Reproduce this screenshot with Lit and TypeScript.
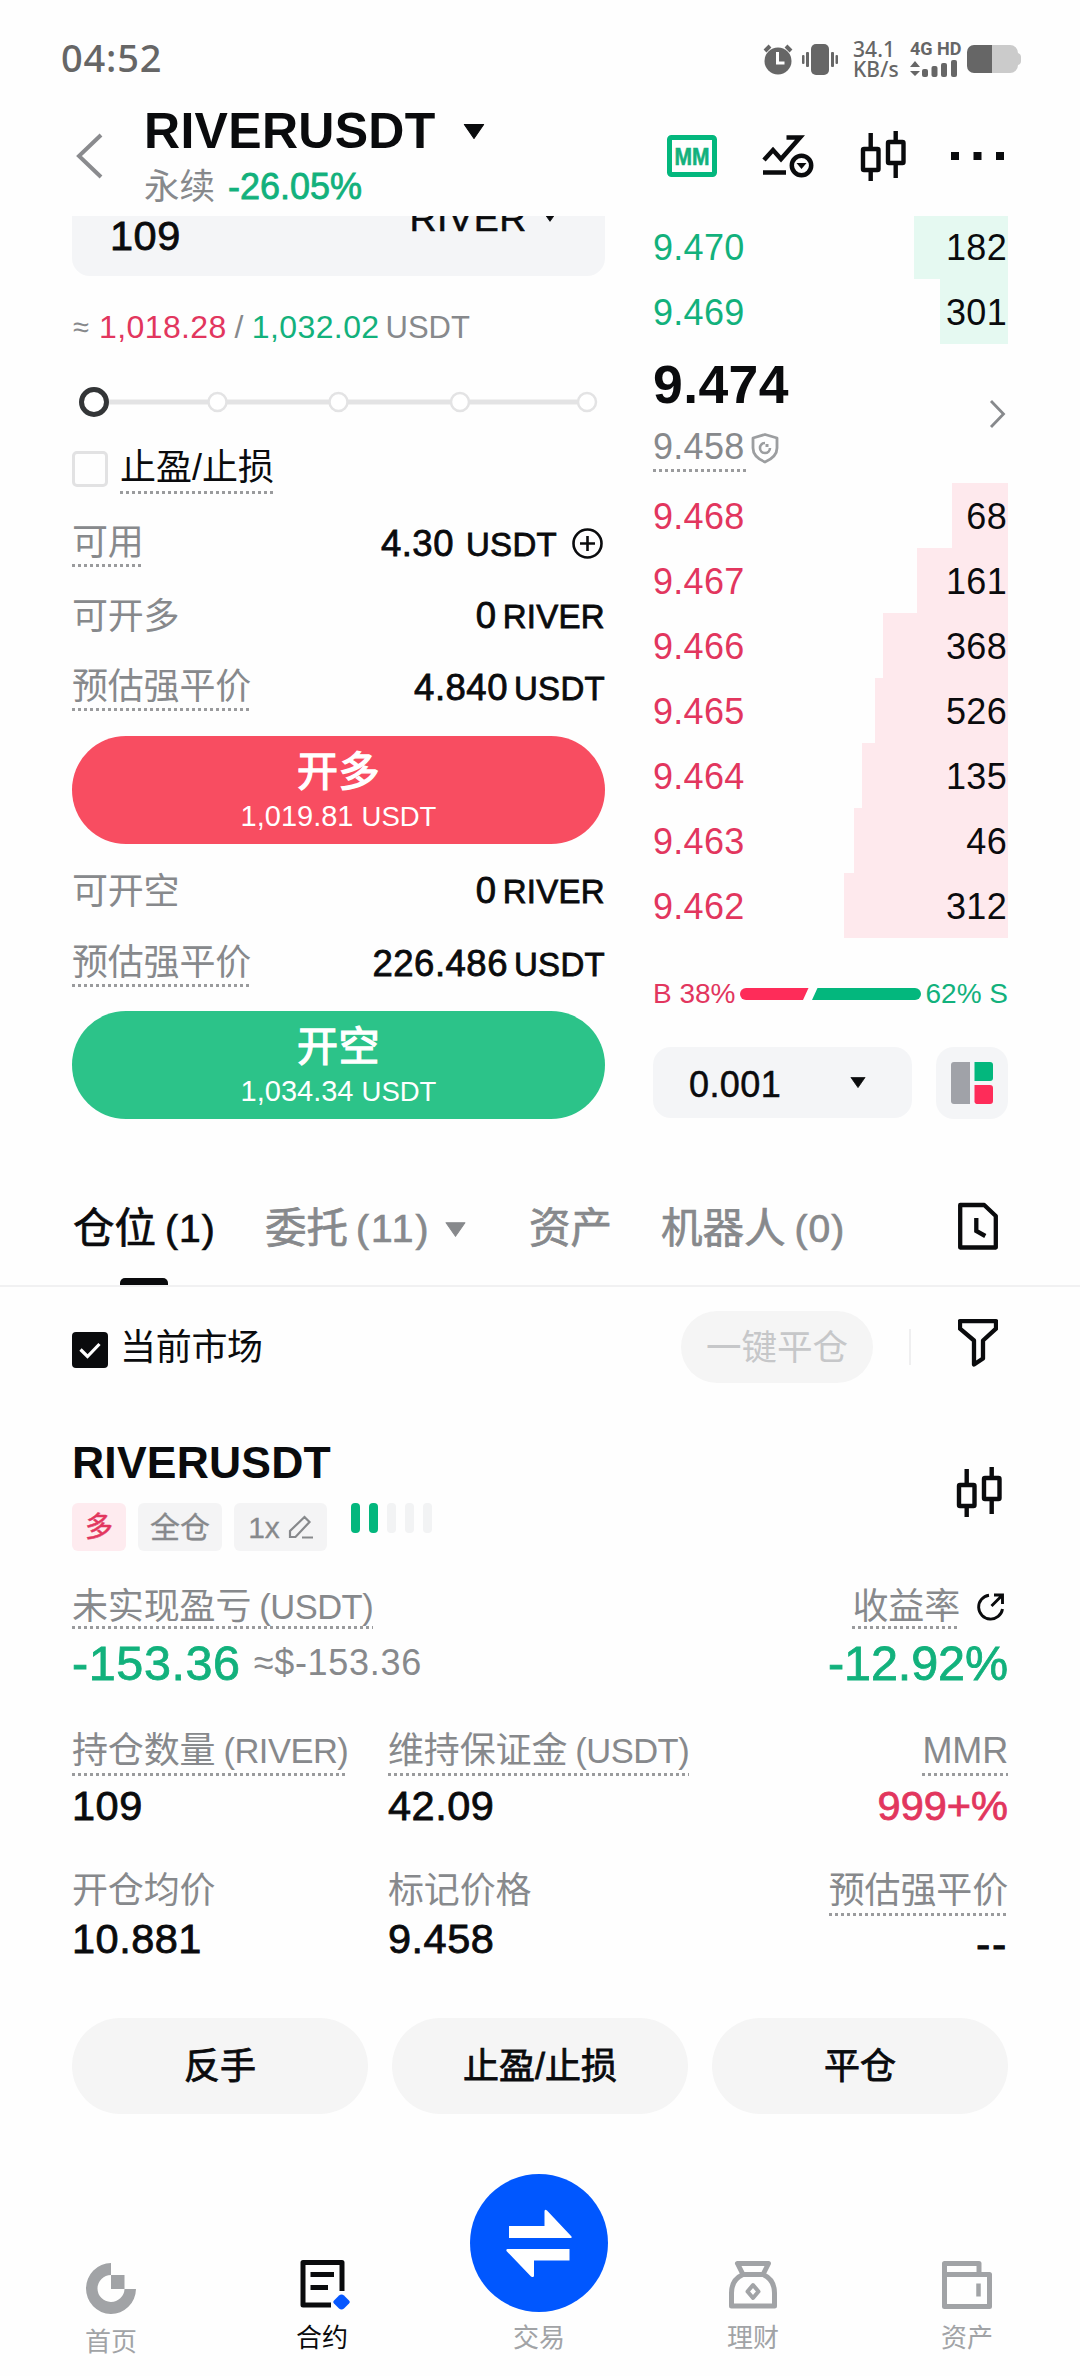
import { LitElement, html, css, svg, nothing } from "lit";
import { customElement, property } from "lit/decorators.js";

const base = css`
  * { box-sizing: border-box; }
  :host {
    display: block;
    font-family: "Liberation Sans", "Noto Sans CJK SC", sans-serif;
    color: #0a0b0d;
  }
  svg { display: block; flex: none; }
  .med { -webkit-text-stroke: 0.8px currentColor; }
  .green { color: #12b17c; }
  .red { color: #e2365e; }
  .gray { color: #87898c; }
  .row { display: flex; justify-content: space-between; }
  .dotted {
    background: repeating-linear-gradient(90deg, #9a9b9d 0 3px, transparent 3px 6px) left bottom / 100% 3px no-repeat;
  }
`;

const candles = html`<svg width="46" height="52" viewBox="0 0 46 52" fill="none" stroke="#0a0b0d" stroke-width="4.400">
  <rect x="3" y="19" width="15.500" height="21" rx="1" /><path d="M10.700 3v16M10.700 40v11" />
  <rect x="28" y="12" width="15.500" height="21" rx="1" /><path d="M35.700 1v11M35.700 33v15" />
</svg>`;

const caret = (w: number, h: number) => html`<svg width=${w} height=${h} viewBox="0 0 20 14"><path d="M1 .5h18L10 13.500z" fill="currentColor" stroke="currentColor" stroke-linejoin="round" /></svg>`;

@customElement("status-bar")
class StatusBar extends LitElement {
  static styles = [base, css`
    :host { color: #666; }
    .bar { display: flex; align-items: center; height: 90px; padding: 27px 59px 0 61px; }
    .time { font: 500 38px/60px "Noto Sans", sans-serif; letter-spacing: 0.800px; flex: 1; margin-top: -4px; }
    .icons { display: flex; align-items: center; height: 60px; }
    .vib { margin-left: 8px; }
    .speed { display: flex; flex-direction: column; font: 500 21px/20px "Noto Sans", sans-serif; margin-left: 14px; width: 57px; letter-spacing: 0.100px; }
    .net { display: flex; flex-direction: column; gap: 3px; font: 700 18px/16px Roboto, sans-serif; width: 57px; }
  `];
  render() {
    return html`<div class="bar">
      <div class="time">04:52</div>
      <div class="icons">
        <svg width="30" height="32" viewBox="0 0 30 32"><circle cx="15" cy="18" r="13.500" fill="#666" /><path d="M2 8l5-5M28 8l-5-5" stroke="#666" stroke-width="4" /><path d="M14.500 9v11h7" fill="none" stroke="#fff" stroke-width="3" /></svg>
        <svg class="vib" width="38" height="32" viewBox="0 0 38 32" fill="#666"><rect x="10" y="1" width="18" height="31" rx="5" /><rect x="5" y="9" width="3" height="15" rx="1" /><rect x="1" y="12" width="2.500" height="9" rx="1" /><rect x="30" y="9" width="3" height="15" rx="1" /><rect x="34.500" y="12" width="2.500" height="9" rx="1" /></svg>
        <div class="speed"><span>34.1</span><span>KB/s</span></div>
        <div class="net"><span>4G HD</span>
          <svg width="48" height="17" viewBox="0 0 48 17" fill="#666"><path d="M5 1l5 6H0zM5 16l5-5H0z" /><rect x="12" y="9" width="6" height="8" rx="2" /><rect x="21.500" y="6" width="6" height="11" rx="2" /><rect x="31" y="3" width="6" height="14" rx="2" /><rect x="41" y="0" width="6" height="17" rx="2" /></svg>
        </div>
        <svg width="54" height="28" viewBox="0 0 54 28"><path d="M8 0h35a8 8 0 0 1 8 8q3 1 3 4v4q0 3-3 4a8 8 0 0 1-8 8H8z" fill="#cbcbcb" /><path d="M25 0H7a7 7 0 0 0-7 7v14a7 7 0 0 0 7 7h18z" fill="#666" /></svg>
      </div>
    </div>`;
  }
}

@customElement("pair-header")
class PairHeader extends LitElement {
  static styles = [base, css`
    .bar { display: flex; height: 126px; padding: 0 75px 0 72px; }
    .back { margin: 43px 41px 0 4px; }
    .pair { flex: 1; padding-top: 12px; }
    .name { display: flex; align-items: center; gap: 27px; font: bold 50px/58px "Liberation Sans", sans-serif; letter-spacing: 0.300px; }
    .sub { display: flex; gap: 13px; font-size: 36px; line-height: 50px; margin-top: 2px; }
    .sub .gray { font-size: 35.500px; }
    .tools { display: flex; align-items: center; height: 132px; }
    .mm { font: bold 24px "Liberation Sans", sans-serif; }
    .t2 { margin-left: 45px; } .t3 { margin-left: 46px; } .t4 { margin-left: 45px; }
  `];
  render() {
    return html`<div class="bar">
      <svg class="back" width="27" height="46" viewBox="0 0 27 46"><path d="M25 2L3 23l22 21" fill="none" stroke="#8a8b8e" stroke-width="4" /></svg>
      <div class="pair">
        <div class="name"><span>RIVERUSDT</span>${caret(22, 15)}</div>
        <div class="sub"><span class="gray">永续</span><span class="green med">-26.05%</span></div>
      </div>
      <div class="tools">
        <svg width="50" height="42" viewBox="0 0 50 42"><rect x="2.500" y="2.500" width="45" height="37" rx="2" fill="none" stroke="#03b77d" stroke-width="5" /><text class="mm" x="7.500" y="29.500" textLength="35" lengthAdjust="spacingAndGlyphs" fill="#12b17c" stroke="#12b17c" stroke-width=".6">MM</text></svg>
        <svg class="t2" width="52" height="44" viewBox="0 0 52 44" fill="none" stroke="#0a0b0d" stroke-width="4.500"><path d="M2 26l9-10 8 9L38 3.500H24.500M1 38.500h23" /><circle cx="39.500" cy="31.500" r="9.700" /><path d="M34.500 29h10l-5 6z" fill="#0a0b0d" stroke="none" /></svg>
        <div class="t3">${candles}</div>
        <svg class="t4" width="54" height="8" viewBox="0 0 54 8"><path d="M0 0h8v8H0zM22.500 0h8v8h-8zM45 0h8v8h-8z" fill="#0a0b0d" /></svg>
      </div>
    </div>`;
  }
}

@customElement("info-line")
class InfoLine extends LitElement {
  @property() label = "";
  @property() amount = "";
  @property() unit = "";
  @property({ type: Boolean }) hint = false;
  @property({ type: Boolean }) plus = false;
  static styles = [base, css`
    .row { height: 44px; }
    .label { font-size: 36px; line-height: 40px; letter-spacing: -0.200px; height: 44px; padding-bottom: 4px; }
    .label.plain { padding-top: 2px; }
    .value { display: flex; align-items: baseline; font-size: 36.500px; line-height: 42px; letter-spacing: 0.500px; }
    .unit { font-size: 33px; margin-left: 6px; letter-spacing: 0.300px; }
    .wide { margin-left: 12px; }
    svg { margin: 5px 2px 0 15px; align-self: flex-start; }
  `];
  render() {
    return html`<div class="row">
      <span class="label gray ${this.hint ? "dotted" : "plain"}">${this.label}</span>
      <span class="value med"><span>${this.amount}</span><span class="unit ${this.plus ? "wide" : ""}">${this.unit}</span>${this.plus
        ? html`<svg width="31" height="31" viewBox="0 0 31 31" fill="none" stroke="#0a0b0d" stroke-width="2.600"><circle cx="15.500" cy="15.500" r="14" /><path d="M15.500 8v15M8 15.500h15" /></svg>`
        : nothing}</span>
    </div>`;
  }
}

@customElement("order-form")
class OrderForm extends LitElement {
  static styles = [base, css`
    :host { width: 533px; }
    .input { display: flex; align-items: flex-start; height: 60px; overflow: hidden; background: #f4f5f7; border-radius: 0 0 18px 18px; padding: 0 46px 0 38px; }
    .qty { flex: 1; font-size: 41.500px; line-height: 40px; letter-spacing: 0.500px; }
    .coin { font-size: 37.500px; line-height: 40px; letter-spacing: 0.600px; margin: -18px 14px 0 0; -webkit-text-stroke: 0.500px currentColor; }
    .input svg { margin-top: -7px; }
    .approx { display: flex; margin-top: 31px; font-size: 32px; line-height: 41px; white-space: pre; letter-spacing: 0.400px; }
    .approx .ap { font-size: 29px; width: 27px; padding-left: 1px; }
    .approx .sl { width: 25px; text-align: center; }
    .approx .u { font-size: 31px; margin-left: 6px; letter-spacing: 0; }
    .slider { margin-top: 39px; }
    .tpsl { display: flex; margin-top: 31px; height: 46px; }
    .box { width: 36px; height: 36px; border: 3px solid #e2e2e3; border-radius: 5px; margin: 3px 12px 0 0; }
    .tpsl .t { font-size: 36px; line-height: 40px; padding-bottom: 6px; }
    .l1 { margin-top: 29px; } .l2 { margin-top: 28px; } .l3 { margin-top: 28px; }
    .l4 { margin-top: 26px; } .l5 { margin-top: 29px; }
    .btn { display: flex; flex-direction: column; align-items: center; height: 108px; border-radius: 54px; color: #fff; }
    .long { background: #f84d61; margin-top: 25px; }
    .short { background: #2cc389; margin-top: 24px; }
    .bt { font-size: 41px; line-height: 50px; margin-top: 11px; -webkit-text-stroke: 1.300px #fff; letter-spacing: 0.500px; }
    .bs { font-size: 29px; line-height: 34px; margin-top: 2px; white-space: pre; }
    .bs span { font-size: 27.500px; }
  `];
  render() {
    return html`
      <div class="input"><span class="qty med">109</span><span class="coin">RIVER</span>${caret(18, 13)}</div>
      <div class="approx"><span class="ap gray">≈</span><span class="red">1,018.28</span><span class="sl gray">/</span><span class="green">1,032.02</span><span class="u gray">USDT</span></div>
      <svg class="slider" width="533" height="30" viewBox="0 0 533 30">
        <path d="M37 15h480" stroke="#e3e3e4" stroke-width="5" />
        ${[145.5, 266.5, 388, 515].map((x) => svg`<circle cx=${x} cy="15" r="9" fill="#fff" stroke="#e3e3e4" stroke-width="2.500" />`)}
        <circle cx="22" cy="15" r="12.500" fill="#fff" stroke="#333537" stroke-width="5" />
      </svg>
      <div class="tpsl"><span class="box"></span><span class="t dotted">止盈/止损</span></div>
      <info-line class="l1" label="可用" amount="4.30" unit="USDT" hint plus></info-line>
      <info-line class="l2" label="可开多" amount="0" unit="RIVER"></info-line>
      <info-line class="l3" label="预估强平价" amount="4.840" unit="USDT" hint></info-line>
      <div class="btn long"><span class="bt">开多</span><span class="bs">1,019.81 <span>USDT</span></span></div>
      <info-line class="l4" label="可开空" amount="0" unit="RIVER"></info-line>
      <info-line class="l5" label="预估强平价" amount="226.486" unit="USDT" hint></info-line>
      <div class="btn short"><span class="bt">开空</span><span class="bs">1,034.34 <span>USDT</span></span></div>`;
  }
}

interface Level { price: string; size: string; depth: number; }
const upper: Level[] = [
  { price: "9.470", size: "182", depth: 94 },
  { price: "9.469", size: "301", depth: 68 },
];
const lower: Level[] = [
  { price: "9.468", size: "68", depth: 56 },
  { price: "9.467", size: "161", depth: 91 },
  { price: "9.466", size: "368", depth: 125 },
  { price: "9.465", size: "526", depth: 133 },
  { price: "9.464", size: "135", depth: 146 },
  { price: "9.463", size: "46", depth: 154 },
  { price: "9.462", size: "312", depth: 164 },
];

@customElement("order-book")
class OrderBook extends LitElement {
  static styles = [base, css`
    :host { width: 355px; overflow: hidden; }
    .levels { display: flex; flex-direction: column; }
    .first { margin-top: -2px; }
    .lv { display: flex; justify-content: space-between; height: 65px; font-size: 36px; line-height: 68px; letter-spacing: 0.300px; }
    .depth { text-align: right; padding-right: 1px; color: #0a0b0d; }
    .up .depth { background: #e5f9f1; }
    .down .depth { background: #fee9ed; }
    .mid { display: flex; justify-content: space-between; align-items: center; height: 139px; padding-right: 2px; }
    .last { font-size: 53.500px; line-height: 56px; font-weight: bold; padding-top: 2px; letter-spacing: 0.400px; }
    .mark { display: flex; margin-top: 13px; font-size: 36px; line-height: 40px; letter-spacing: 0.300px; }
    .mark .dotted { padding: 1px 1px 5px 0; }
    .mark svg { margin: 6px 0 0 4px; }
    .ratio { display: flex; align-items: center; justify-content: space-between; height: 31px; margin-top: 40px; font-size: 28px; line-height: 31px; }
    .ctl { display: flex; justify-content: space-between; margin-top: 38px; height: 72px; }
    .sel { display: flex; align-items: center; justify-content: space-between; width: 259px; height: 71px; background: #f4f5f7; border-radius: 18px; padding: 4px 46px 0 36px; font-size: 36px; line-height: 66px; letter-spacing: 0.400px; }
    .sel svg { margin-top: -4px; }
    .sel .med { -webkit-text-stroke-width: 0.500px; }
    .lay { width: 72px; height: 72px; background: #f4f5f7; border-radius: 18px; padding: 15px; }
  `];
  private level(l: Level, tone: string) {
    return html`<div class="lv"><span class=${tone}>${l.price}</span><span class="depth" style="width:${l.depth}px">${l.size}</span></div>`;
  }
  render() {
    return html`
      <div class="levels first up">${upper.map((l) => this.level(l, "green"))}</div>
      <div class="mid">
        <div>
          <div class="last">9.474</div>
          <div class="mark gray"><span class="dotted">9.458</span>
            <svg width="30" height="32" viewBox="0 0 30 32" fill="none" stroke="#9c9ea0"><path d="M15 2.500L27 6v10c0 7-5 11-12 14C8 27 3 23 3 16V6z" stroke-width="2.800" stroke-linejoin="round" /><path d="M15 11a5 5 0 1 0 5 5" stroke-width="2.600" /><path d="M15.500 12h3v3h-3z" fill="#9c9ea0" stroke="none" /></svg>
          </div>
        </div>
        <svg width="17" height="30" viewBox="0 0 17 30"><path d="M2 2l12.500 13L2 28" fill="none" stroke="#87898c" stroke-width="2.800" /></svg>
      </div>
      <div class="levels down">${lower.map((l) => this.level(l, "red"))}</div>
      <div class="ratio"><span class="red">B 38%</span>
        <svg width="181" height="12" viewBox="0 0 181 12"><path d="M6 0h62.500l-5.500 12H6A6 6 0 0 1 6 0z" fill="#fe2c59" /><path d="M77.500 0H175a6 6 0 0 1 0 12H72z" fill="#03b77d" /></svg>
        <span class="green">62% S</span></div>
      <div class="ctl">
        <div class="sel"><span class="med">0.001</span>${caret(16, 11)}</div>
        <div class="lay"><svg width="42" height="42" viewBox="0 0 42 42"><path d="M3 0h16v42H3a3 3 0 0 1-3-3V3a3 3 0 0 1 3-3z" fill="#a0a2a8" /><path d="M23.500 0H39a3 3 0 0 1 3 3v13a3 3 0 0 1-3 3H23.500z" fill="#03b77d" /><path d="M23.500 23H39a3 3 0 0 1 3 3v13a3 3 0 0 1-3 3H26a2.500 2.500 0 0 1-2.500-3z" fill="#fe2c59" /></svg></div>
      </div>`;
  }
}

@customElement("position-tabs")
class PositionTabs extends LitElement {
  static styles = [base, css`
    .tabs { display: grid; grid-template-columns: 192px 264px 132px 1fr auto; height: 108px; margin-top: 60px; padding: 0 82px 0 72px; border-bottom: 2px solid #f1f1f2; font-size: 41.500px; line-height: 100px; }
    .tab { display: flex; white-space: pre; padding-left: 1px; color: #87898c; -webkit-text-stroke: 0.700px currentColor; }
    .tab .n { margin-left: 9px; font-size: 39px; letter-spacing: 1px; }
    .tab .n2 { margin-left: 8px; letter-spacing: 2px; }
    .tab svg { margin: 43px 0 0 15px; }
    .on { color: #0a0b0d; flex-direction: column; }
    .on .txt { display: flex; height: 99px; }
    .mark { width: 48px; height: 7px; border-radius: 5px 5px 0 0; background: #0a0b0d; margin-left: 47px; }
    .doc { margin-top: 23px; }
  `];
  render() {
    return html`<div class="tabs">
      <div class="tab on"><span class="txt"><span>仓位</span><span class="n">(1)</span></span><span class="mark"></span></div>
      <div class="tab"><span>委托</span><span class="n n2">(11)</span>${caret(21, 15)}</div>
      <div class="tab"><span>资产</span></div>
      <div class="tab"><span>机器人</span><span class="n">(0)</span></div>
      <svg class="doc" width="40" height="49" viewBox="0 0 40 49" fill="none" stroke="#0a0b0d" stroke-width="4.300"><path d="M2.200 3h24L37.800 14v31.500H2.200z" stroke-linejoin="round" /><path d="M18.300 16v13l9 5" /></svg>
    </div>`;
  }
}

@customElement("position-card")
class PositionCard extends LitElement {
  static styles = [base, css`
    :host { padding: 0 72px; }
    .filter { display: flex; align-items: center; height: 72px; margin-top: 24px; padding-right: 10px; }
    .chk { margin: 6px 12px 0 0; }
    .cur { flex: 1; font-size: 36px; line-height: 72px; letter-spacing: -0.300px; padding-top: 2px; }
    .pill { width: 192px; height: 72px; border-radius: 36px; background: #f5f5f5; color: #c6c7c9; text-align: center; font-size: 35.500px; line-height: 75px; }
    .div { width: 2px; height: 36px; background: #efeff0; margin: 0 47px 0 36px; }
    .fun { margin-top: -8px; }
    .head { display: flex; justify-content: space-between; margin-top: 58px; height: 110px; }
    .name { font-size: 44.500px; line-height: 44px; font-weight: bold; letter-spacing: 0.200px; }
    .cn { margin: 25px 6px 0 0; }
    .tags { display: flex; margin-top: 18px; gap: 12px; font-size: 30px; line-height: 49px; text-align: center; }
    .tag { height: 48px; border-radius: 6px; background: #f4f4f5; color: #87898c; -webkit-text-stroke: 0.300px currentColor; }
    .t1 { width: 54px; background: #feebef; color: #e2365e; font-size: 28px; -webkit-text-stroke: 0.500px currentColor; }
    .t2 { width: 84px; }
    .t3 { width: 93px; display: flex; justify-content: center; padding-left: 1px; }
    .t3 svg { margin: 12px 0 0 8px; }
    .pips { display: flex; gap: 9px; margin-left: 12px; }
    .pip { width: 9px; height: 30px; border-radius: 4px; background: #f2f3f4; }
    .pip.lit { background: #03b77d; }
    .grid { display: grid; grid-template-columns: 316px 1fr auto; }
    .g1 { display: flex; justify-content: space-between; margin-top: 36px; height: 101px; }
    .g2 { margin-top: 43px; height: 97px; }
    .g3 { margin-top: 43px; height: 94px; }
    .lb { display: flex; width: fit-content; font-size: 36px; line-height: 40px; padding-bottom: 5px; height: 45px; letter-spacing: -0.150px; }
    .lb .p { font-size: 34.500px; margin-left: 8px; letter-spacing: -0.500px; }
    .g1 .lb { padding-bottom: 2px; height: 42px; }
    .r { text-align: right; }
    .r .lb { margin-left: auto; }
    .big { font-size: 48.500px; line-height: 50px; margin-top: 9px; letter-spacing: -0.100px; }
    .pnl { display: flex; white-space: pre; letter-spacing: 0.600px; }
    .pnl .gray { font-size: 36px; line-height: 49px; margin-left: 13px; letter-spacing: 0.700px; }
    .roi { display: flex; justify-content: flex-end; }
    .roi svg { margin: 6px 3px 0 16px; }
    .v { font-size: 41.500px; line-height: 44px; margin-top: 8px; letter-spacing: 0.500px; }
    .r .v { letter-spacing: 0; }
    .g3 .v { margin-top: 1px; }
    .g3 .none { margin-top: 6px; letter-spacing: 2px; -webkit-text-stroke-width: 1.200px; }
    .acts { display: grid; grid-template-columns: 1fr 1fr 1fr; gap: 24px; margin-top: 53px; }
    .act { height: 96px; border-radius: 48px; background: #f5f5f5; text-align: center; font-size: 36px; line-height: 98px; }
  `];
  private lb(t: string, p = "", hint = true) {
    return html`<div class="lb gray ${hint ? "dotted" : ""}"><span>${t}</span>${p ? html`<span class="p">${p}</span>` : nothing}</div>`;
  }
  render() {
    return html`
      <div class="filter">
        <svg class="chk" width="36" height="36" viewBox="0 0 36 36"><rect width="36" height="36" rx="4" fill="#0a0b0d" /><path d="M8.500 17.500l7 7L27.500 12" fill="none" stroke="#fff" stroke-width="3.200" /></svg>
        <span class="cur">当前市场</span>
        <span class="pill">一键平仓</span><span class="div"></span>
        <svg class="fun" width="40" height="48" viewBox="0 0 40 48" fill="none" stroke="#0a0b0d" stroke-width="4.300" stroke-linejoin="round"><path d="M2 2.200h36v7.500L25 21.500v18L16 45.500V21.500L2 9.700z" /></svg>
      </div>
      <div class="head">
        <div>
          <div class="name">RIVERUSDT</div>
          <div class="tags">
            <span class="tag t1">多</span><span class="tag t2">全仓</span>
            <span class="tag t3">1x<svg width="26" height="24" viewBox="0 0 26 24" fill="none" stroke="#87898c" stroke-width="2.200"><path d="M2 22v-6L16.500 2l5 5L7.500 22zM14 22.500h11" /></svg></span>
            <span class="pips">${[1, 1, 0, 0, 0].map((on) => html`<i class="pip ${on ? "lit" : ""}"></i>`)}</span>
          </div>
        </div>
        <div class="cn">${candles}</div>
      </div>
      <div class="g1">
        <div>${this.lb("未实现盈亏", "(USDT)")}<div class="big pnl"><span class="green med">-153.36</span><span class="gray">≈$-153.36</span></div></div>
        <div class="r">
          <div class="roi">${this.lb("收益率")}<svg width="29" height="29" viewBox="0 0 29 29" fill="none" stroke="#0a0b0d" stroke-width="2.900"><path d="M13 2.200A12 12 0 1 0 26.500 16" /><path d="M15.500 13L26 2.500M18 2h8.500v9" /></svg></div>
          <div class="big green med">-12.92%</div>
        </div>
      </div>
      <div class="grid g2">
        <div>${this.lb("持仓数量", "(RIVER)")}<div class="v med">109</div></div>
        <div>${this.lb("维持保证金", "(USDT)")}<div class="v med">42.09</div></div>
        <div class="r">${this.lb("MMR")}<div class="v red med">999+%</div></div>
      </div>
      <div class="grid g3">
        <div>${this.lb("开仓均价", "", false)}<div class="v med">10.881</div></div>
        <div>${this.lb("标记价格", "", false)}<div class="v med">9.458</div></div>
        <div class="r">${this.lb("预估强平价")}<div class="v med none">--</div></div>
      </div>
      <div class="acts">
        <div class="act med">反手</div><div class="act med">止盈/止损</div><div class="act med">平仓</div>
      </div>`;
  }
}

@customElement("bottom-nav")
class BottomNav extends LitElement {
  static styles = [base, css`
    .nav { display: grid; grid-template-columns: repeat(5, 1fr); height: 202px; margin-top: 60px; padding: 0 6px 0 4px; color: #a1a3a6; }
    .it { display: flex; flex-direction: column; align-items: center; font-size: 26px; line-height: 30px; }
    .it svg { margin-top: auto; }
    .it span { margin: 13px 0 23px; }
    .home span { margin: 13px 0 19px; }
    .mid span { margin-top: 11px; }
    .on { color: #0a0b0d; padding-right: 6px; }
    .on svg { margin-right: -5px; }
  `];
  render() {
    return html`<div class="nav">
      <div class="it home"><svg width="50" height="51" viewBox="0 0 50 51"><path d="M25 0A25 25.500 0 1 0 50 26H38.500A13.500 13.500 0 1 1 25 12z" fill="#a1a3a6" /><path d="M25 12h13.500v14H25z" fill="#a1a3a6" /></svg><span>首页</span></div>
      <div class="it on"><svg width="50" height="50" viewBox="0 0 50 50" fill="none" stroke="#0a0b0d" stroke-width="5"><path d="M42 31V2.500H3V45h28" stroke-linejoin="round" /><path d="M10.500 14.500H34M10.500 27.500H28" /><path d="M41.500 34.500q1.500 0 2.500 1l5 5q1.500 1.500 0 3l-5 5q-2.500 2-5 0l-5-5q-1.500-1.500 0-3l5-5q1-1 2.500-1z" fill="#0657ff" stroke="none" /></svg><span>合约</span></div>
      <div class="it mid"><svg width="138" height="138" viewBox="0 0 138 138"><circle cx="69" cy="69" r="69" fill="#0057ff" /><path d="M39 52h35.500V37.500q0-3 2.500-1L101.500 62.500q.5 1.500-1 1.500H39zM99.500 86.500H64V101.500q0 2.500-3 1L36.500 77q-.5-2 1-2h62z" fill="#fff" /></svg><span>交易</span></div>
      <div class="it"><svg width="50" height="50" viewBox="0 0 50 50" fill="none" stroke="#a1a3a6" stroke-width="5" stroke-linejoin="round"><path d="M9.500 3.500h31L35 14.500H15z" /><path d="M15 14.500C7 18 3.500 25 3.500 33v13h43V33c0-8-3.500-15-11.500-18.500" /><path d="M25 25l5.500 6.500L25 38l-5.500-6.500z" stroke-width="4" /></svg><span>理财</span></div>
      <div class="it"><svg width="52" height="50" viewBox="0 0 52 50" fill="none" stroke="#a1a3a6" stroke-width="5" stroke-linejoin="round"><path d="M3.500 14.500h45V46.500h-45zM3.500 14.500v-11H38v11" /><path d="M37.500 23.500v13" stroke-width="4.500" /></svg><span>资产</span></div>
    </div>`;
  }
}

@customElement("app-root")
class AppRoot extends LitElement {
  static styles = [base, css`
    :host { width: 1080px; height: 2376px; background: #fefefe; overflow: hidden; }
    .trade { display: flex; gap: 48px; height: 903px; padding: 0 72px; }
  `];
  render() {
    return html`
      <status-bar></status-bar>
      <pair-header></pair-header>
      <div class="trade"><order-form></order-form><order-book></order-book></div>
      <position-tabs></position-tabs>
      <position-card></position-card>
      <bottom-nav></bottom-nav>`;
  }
}
